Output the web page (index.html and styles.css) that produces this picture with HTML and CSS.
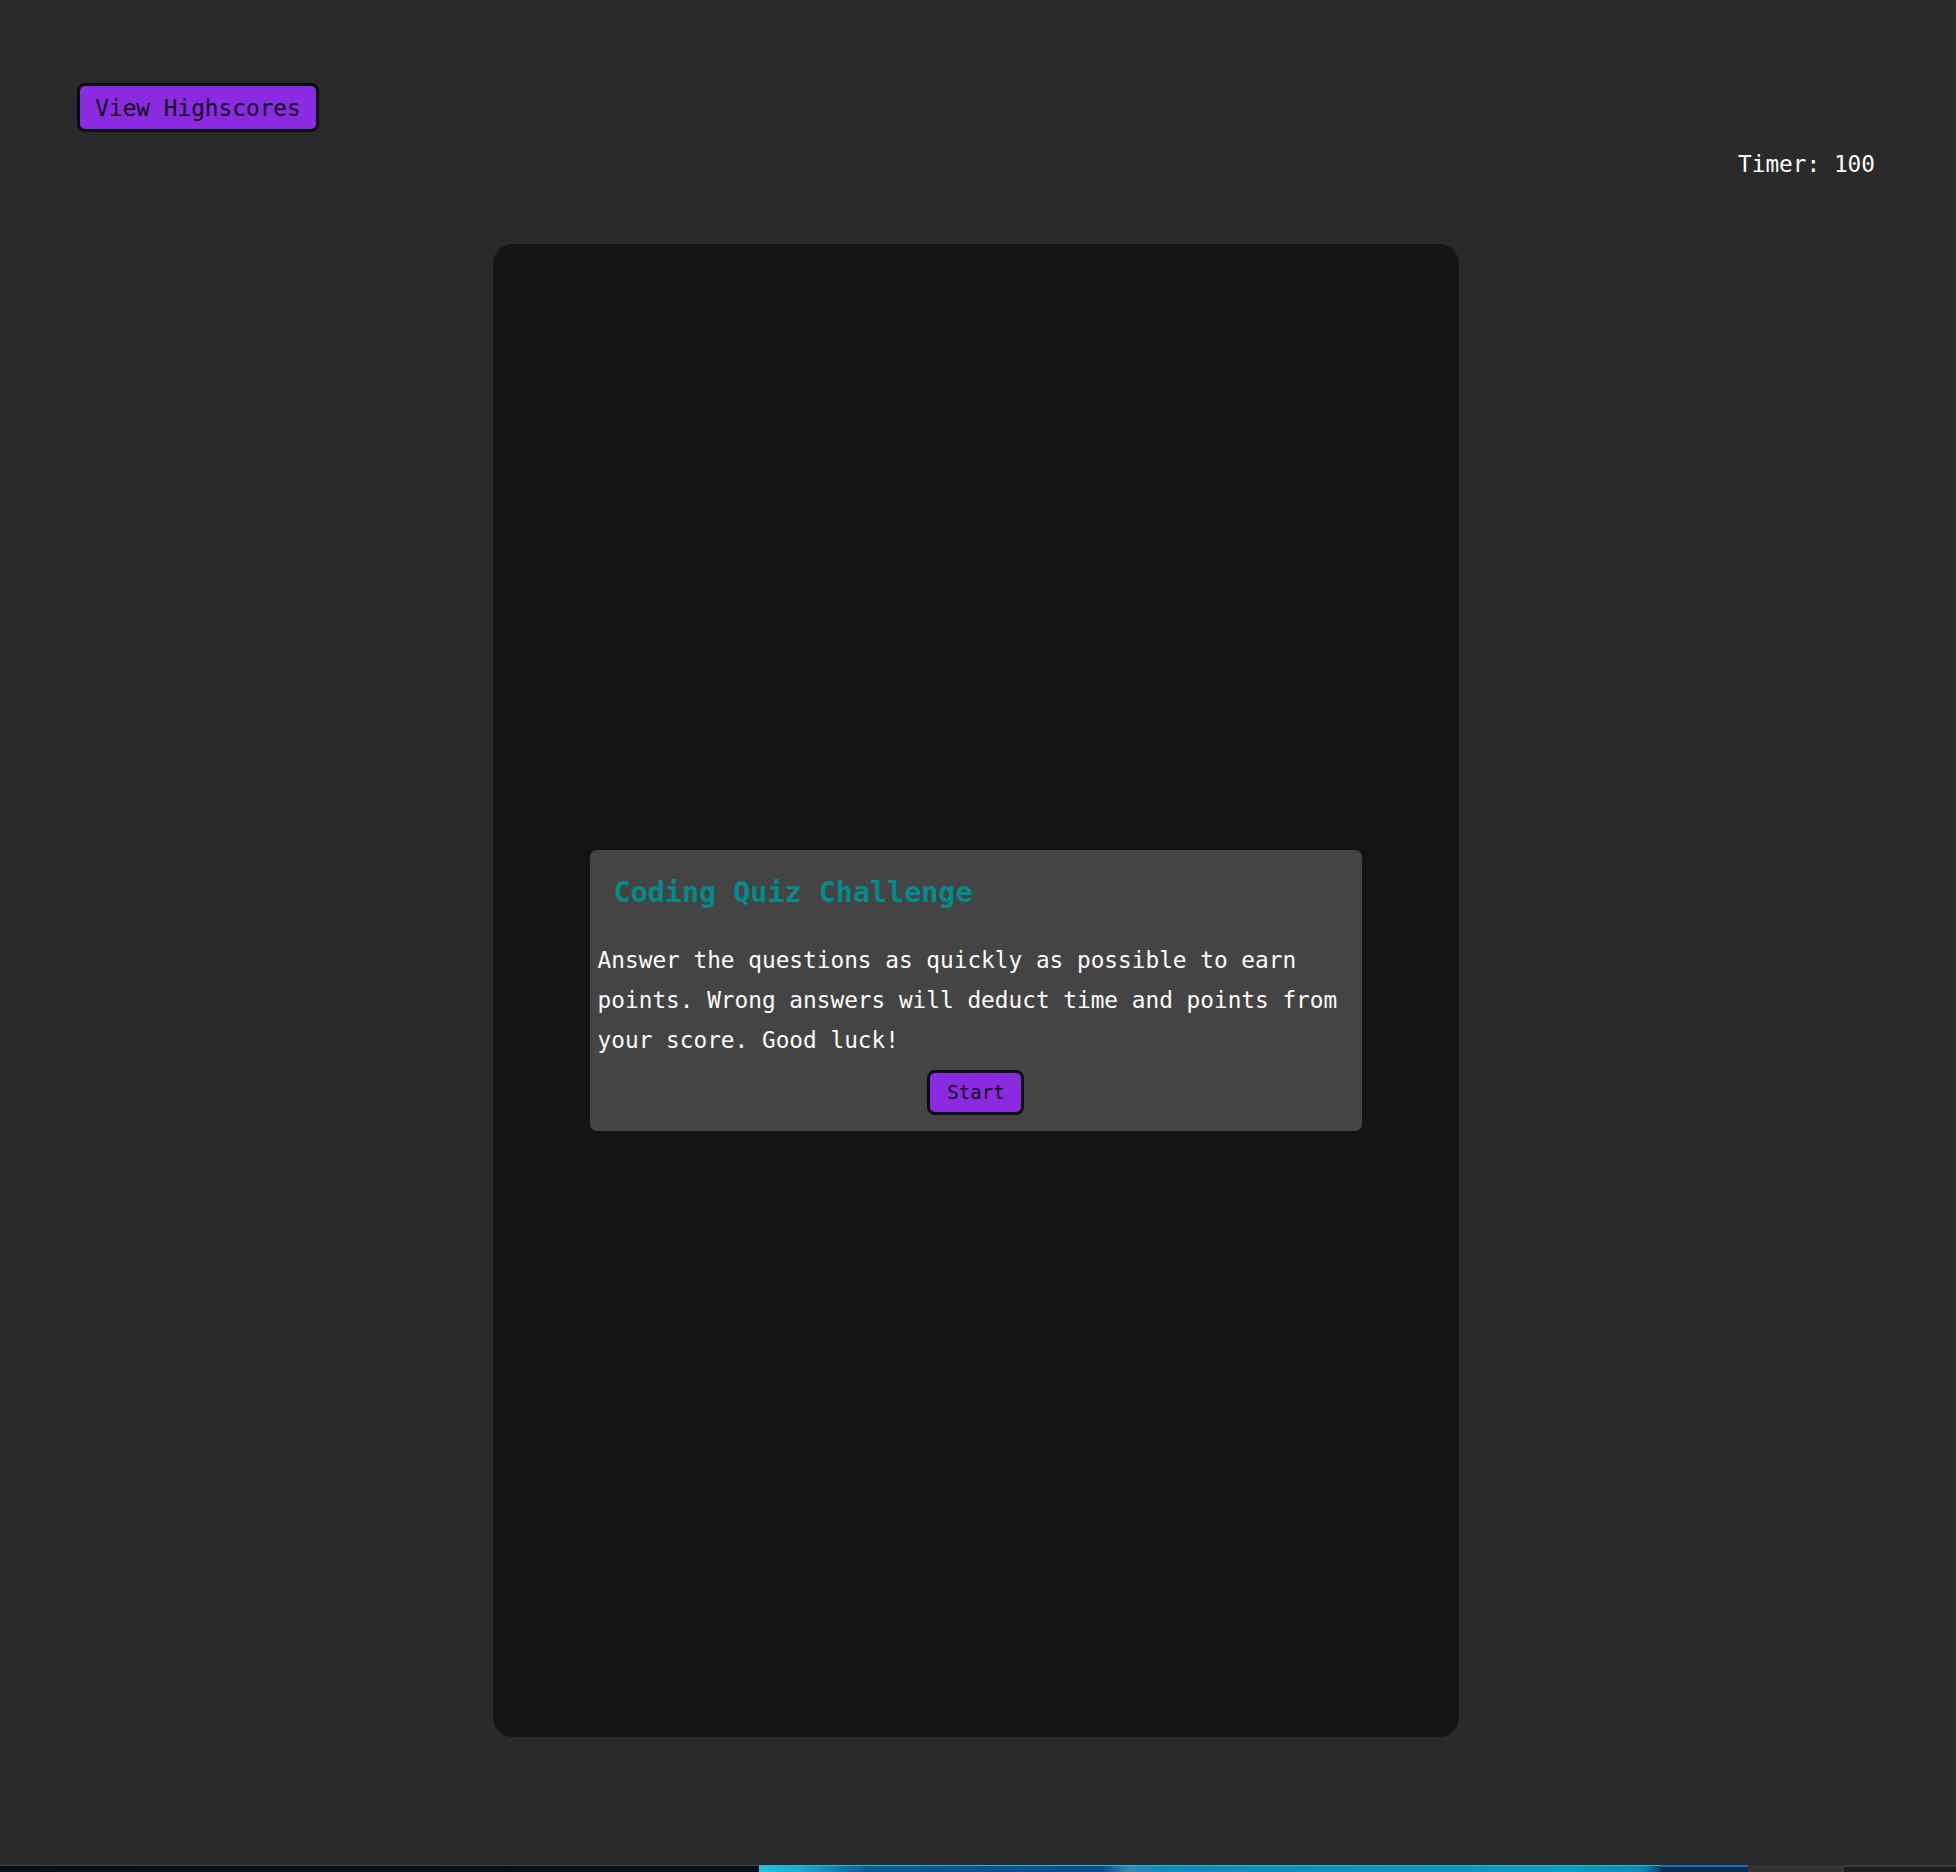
FILE: index.html
```html
<!DOCTYPE html>
<html lang="en">
<head>
<meta charset="utf-8">
<title>Coding Quiz Challenge</title>
<link rel="stylesheet" href="styles.css">
</head>
<body>
  <div class="page">
    <header class="top-bar">
      <button class="btn btn-scores">View Highscores</button>
      <div class="timer">Timer: 100</div>
    </header>
    <main class="quiz-card">
      <section class="intro">
        <h2 class="intro-title">Coding Quiz Challenge</h2>
        <p class="intro-text">Answer the questions as quickly as possible to earn points. Wrong answers will deduct time and points from your score. Good luck!</p>
        <div class="intro-actions">
          <button class="btn btn-start">Start</button>
        </div>
      </section>
    </main>
    <div class="taskbar">
      <div class="seg seg-dark"></div>
      <div class="seg seg-glow"></div>
      <div class="seg seg-blue"></div>
      <div class="seg seg-gray"></div>
      <div class="seg seg-end"></div>
    </div>
  </div>
</body>
</html>
```

FILE: styles.css
```css
* { box-sizing: border-box; }

html, body {
  margin: 0;
  padding: 0;
  background: #2a2a2a;
}

body {
  font-family: "DejaVu Sans Mono", "Liberation Mono", monospace;
  color: #ffffff;
}

.page {
  height: 1872px;
  display: flex;
  flex-direction: column;
  overflow: hidden;
}

.top-bar {
  height: 244px;
  flex: none;
  padding: 83px 81px 0 77px;
  display: flex;
  justify-content: space-between;
  align-items: flex-start;
}

.btn {
  font-family: "DejaVu Sans Mono", "Liberation Mono", monospace;
  background: #8a2be2;
  color: #120a18;
  border: 3px solid #0b0b0b;
  border-radius: 8px;
  cursor: pointer;
  padding: 0;
  display: flex;
  align-items: center;
  justify-content: center;
}

.btn-scores {
  width: 242px;
  height: 49px;
  font-size: 22.75px;
}

.timer {
  margin-top: 67px;
  font-size: 22.75px;
  line-height: 28px;
  color: #ffffff;
}

.quiz-card {
  flex: none;
  width: 966px;
  height: 1493px;
  margin: 0 0 0 493px;
  background: #141414;
  border-radius: 20px;
  display: flex;
  align-items: center;
  justify-content: center;
}

.intro {
  width: 80%;
  background: #444444;
  border-radius: 7px;
  padding: 0 8px 16px;
}

.intro-title {
  margin: 0;
  padding: 25px 16px 0;
  font-size: 28.4px;
  line-height: 36px;
  font-weight: bold;
  color: #008b8b;
}

.intro-text {
  margin: 29px 0 0;
  font-size: 22.75px;
  line-height: 40px;
  color: #ffffff;
}

.intro-actions {
  margin-top: 10px;
  display: flex;
  justify-content: center;
}

.btn-start {
  width: 97px;
  height: 45px;
  font-size: 19.1px;
}

.taskbar {
  margin-top: auto;
  height: 7px;
  flex: none;
  display: flex;
}

.seg { height: 100%; }

.seg-dark {
  width: 759px;
  background: linear-gradient(to right, #03121a, #021018);
  border-top: 1px solid #3c4a52;
}

.seg-glow {
  width: 902px;
  background: linear-gradient(to right, #22c6de 0%, #1aa8cc 5%, #0b5c94 12%, #0a4f88 38%, #3a88b4 41%, #0d8cb8 45%, #0b9cc0 90%, #0a8ab4 98%, #06406e 100%);
  border-top: 1px solid #2ab8d8;
}

.seg-blue {
  width: 87px;
  background: linear-gradient(to bottom, #1a6fc0 0 2px, #0b2a4c 2px);
}

.seg-gray {
  width: 96px;
  background: #333333;
}

.seg-end {
  flex: 1;
  background: #1c1c1c;
  border-top: 2px solid #3a3a3a;
}
```
